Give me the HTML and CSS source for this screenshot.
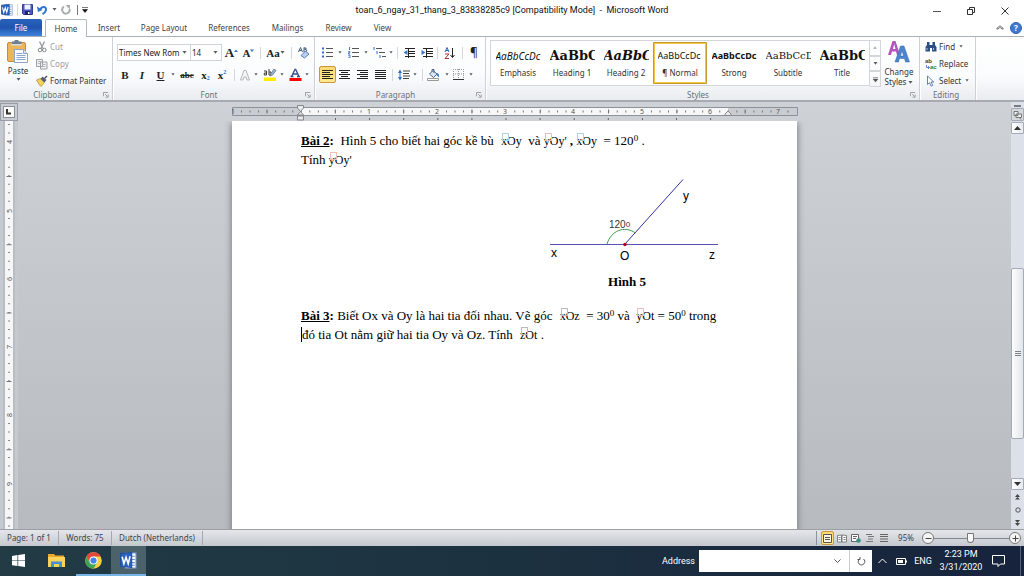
FILE: index.html
```html
<!DOCTYPE html>
<html lang="en">
<head>
<meta charset="utf-8">
<title>toan_6_ngay_31_thang_3_83838285c9 [Compatibility Mode] - Microsoft Word</title>
<link rel="stylesheet" href="styles.css">
</head>
<body>
<svg class="defs" aria-hidden="true">
  <symbol id="down" viewBox="0 0 5 3"><path d="M0.5 0h4L2.500 2.700z" fill="#555b63"/></symbol>
  <symbol id="launch" viewBox="0 0 7 7"><path d="M0.500 5V.5H6" fill="none" stroke="#8b9098"/><path d="M2.500 2.500l2.500 2.500M6 3v3H3" fill="none" stroke="#8b9098"/></symbol>
  <symbol id="wordlogo" viewBox="0 0 16 16"><path d="M5 1h10v14H5z" fill="#fff" stroke="#7fa0d8"/><path d="M11 4h3M11 7h3M11 10h3M11 12.500h3" stroke="#6c8fcb"/><path d="M0.500 1.500L11 0.500v14L.5 13.500z" fill="#2a62bd" stroke="#1f4f9f"/><path d="M2 4.500l1.700 6.500L5.700 5l2 6L9.500 4" fill="none" stroke="#fff" stroke-width="1.500"/></symbol>
</svg>
<div class="app">
  <header class="titlebar">
    <div class="quick">
      <button aria-label="Word menu"><svg width="12" height="12"><use href="#wordlogo"/></svg></button>
      <i class="vline"></i>
      <button aria-label="Save"><svg width="11" height="11" viewBox="0 0 11 11"><path d="M.5.5h10v10H1.500l-1-1z" fill="#4b55c4" stroke="#343c9c"/><path d="M2.500 0.500h6v5h-6z" fill="#eef1ff"/><path d="M3 7h5v4H3z" fill="#1e2560"/><path d="M6 8h1.500v2H6z" fill="#fff"/></svg></button>
      <button aria-label="Undo"><svg width="11" height="10" viewBox="0 0 11 10"><path d="M3 4.500C5 .8 9.200 1.300 9 4.500 8.900 6.500 7.500 8 5.500 9" fill="none" stroke="#2f74cf" stroke-width="2"/><path d="M0 1.500l1 5.500 4.500-2z" fill="#2f74cf"/></svg></button>
      <button aria-label="Undo list"><svg width="5" height="3"><use href="#down"/></svg></button>
      <button class="redo" aria-label="Repeat"><svg width="10" height="10" viewBox="0 0 10 10"><path d="M3 1.700A3.700 3.700 0 1 0 8.500 4" fill="none" stroke="#aaadb1" stroke-width="2"/><path d="M4.500 0H9v4.500z" fill="#aaadb1"/></svg></button>
      <i class="vline dark"></i>
      <button aria-label="Customize toolbar"><svg width="6" height="6" viewBox="0 0 6 6"><path d="M0 .5h6M.5 2.500h5L3 5.500z" stroke="#222" stroke-width=".6"/></svg></button>
    </div>
    <h1 class="title">toan_6_ngay_31_thang_3_83838285c9 [Compatibility Mode] &nbsp;- &nbsp;Microsoft Word</h1>
    <div class="winbtns">
      <button aria-label="Minimize"><svg width="8" height="8"><path d="M0 4.500h8" stroke="#555"/></svg></button>
      <button aria-label="Restore"><svg width="8" height="8" viewBox="0 0 8 8"><path d="M.5 2.500h5v5h-5zM2.500 2V.5h5v5H6" fill="none" stroke="#333"/></svg></button>
      <button aria-label="Close"><svg width="8" height="8" viewBox="0 0 8 8"><path d="M.5.5l7 7M7.500.5l-7 7" stroke="#333"/></svg></button>
    </div>
  </header>
  <nav class="tabs">
    <button class="file">File</button>
    <button class="home">Home</button>
    <button class="t-insert">Insert</button>
    <button class="t-layout">Page Layout</button>
    <button class="t-ref">References</button>
    <button class="t-mail">Mailings</button>
    <button class="t-review">Review</button>
    <button class="t-view">View</button>
    <span class="grow"></span>
    <button class="mini" aria-label="Minimize the ribbon"><svg width="8" height="5" viewBox="0 0 8 5"><path d="M1 4.300L.8 3.300 4 .7l3.200 2.600-.2 1-3-1.800z" fill="#fff" stroke="#555" stroke-width=".8"/></svg></button>
    <button class="help" aria-label="Help">?</button>
  </nav>
  <section class="ribbon">
    <div class="group clipboard">
      <div class="body">
        <button class="paste"><svg width="22" height="24" viewBox="0 0 22 24"><rect x=".5" y="2.500" width="18" height="19" rx="1.500" fill="#edb557" stroke="#c88d35"/><path d="M5 1.500h2L8 0h3l1 1.500h2.500V5H5z" fill="#6d7f91"/><path d="M4 4h11v1.500H4z" fill="#d6dbe0"/><path d="M7.500 9.500h9l4 4v9h-13z" fill="#f9fbff" stroke="#91a4c6"/><path d="M16.500 9.500v4h4" fill="#d9e4f5" stroke="#91a4c6"/><path d="M9.500 13.500h6M9.500 15.500h9M9.500 17.500h9M9.500 19.500h9" stroke="#8ba7cf"/></svg><span>Paste</span><svg width="5" height="3"><use href="#down"/></svg></button>
        <div class="stack">
          <button class="off"><svg width="12" height="12" viewBox="0 0 12 12"><path d="M3.500.5l3.500 7M8.500.5L5 7.500" stroke="#999da2" stroke-width="1.400"/><circle cx="4" cy="9" r="1.800" fill="none" stroke="#85898f"/><circle cx="8.300" cy="9" r="1.800" fill="none" stroke="#85898f"/></svg>Cut</button>
          <button class="off"><svg width="12" height="12" viewBox="0 0 12 12"><path d="M.5 1.500h6v7h-6zM4.500 4h6.500v7H4.500z" fill="#f0f1f2" stroke="#9da1a6"/><path d="M2 3.500h3M2 5.500h2M6 6.500h3.500M6 8.500h3.500" stroke="#b4b7bb"/></svg>Copy</button>
          <button><svg width="12" height="12" viewBox="0 0 12 12"><path d="M.5 5l4-1.500 4 4L5 11.500 3.500 10z" fill="#f3d259" stroke="#a8863a" stroke-width=".7"/><path d="M4.500 4l2-2.500 4 3.500-2 2.500z" fill="#556074"/><path d="M8 3l2.500-2.500 1 1L9 4z" fill="#44506b"/></svg>Format Painter</button>
        </div>
      </div>
      <footer><span>Clipboard</span><button aria-label="Clipboard options"><svg width="6" height="6"><use href="#launch"/></svg></button></footer>
    </div>
    <div class="group font">
      <div class="rows">
        <div class="row f1">
          <label class="combo"><select aria-label="Font"><option>Times New Rom</option></select><svg width="5" height="3"><use href="#down"/></svg></label>
          <label class="combo size"><select aria-label="Font size"><option>14</option></select><svg width="5" height="3"><use href="#down"/></svg></label>
          <button class="serif big" aria-label="Grow font">A<svg width="4" height="8"><path d="M0 3l2-2.500L4 3z" fill="#3c76c3"/></svg></button>
          <button class="serif" aria-label="Shrink font">A<svg width="4" height="8"><path d="M0 .5h4L2 3z" fill="#3c76c3"/></svg></button>
          <i class="vline"></i>
          <button class="serif" aria-label="Change case">Aa<svg width="5" height="3"><use href="#down"/></svg></button>
          <i class="vline"></i>
          <button aria-label="Clear formatting"><svg width="13" height="13" viewBox="0 0 13 13"><path d="M1.500 6L3.500 1.500 5.500 6M2.500 4.500h2M7 1.500V6h2l.8-1.200L9 3.500H7.500M9 3.500V2H7" fill="none" stroke="#3f5875"/><path d="M4 9.500L8.500 5l3.500 3-4.500 4z" fill="#b8cff2" stroke="#5d80b8"/></svg></button>
        </div>
        <div class="row f2">
          <button class="serif" aria-label="Bold">B</button>
          <button class="serif ital" aria-label="Italic">I</button>
          <button class="serif under" aria-label="Underline">U</button>
          <button aria-label="Underline style"><svg width="4" height="3"><use href="#down"/></svg></button>
          <button class="serif strike" aria-label="Strikethrough">abc</button>
          <button class="serif" aria-label="Subscript">x<sub>2</sub></button>
          <button class="serif" aria-label="Superscript">x<sup>2</sup></button>
          <i class="vline"></i>
          <button class="off" aria-label="Text effects"><svg width="12" height="12" viewBox="0 0 12 12"><path d="M1.500 11L5 1.500h2L10.500 11H8L7 8H5L4 11z" fill="#f4f4f4" stroke="#b5b7ba"/></svg><svg width="4" height="3"><use href="#down"/></svg></button>
          <button aria-label="Highlight"><svg width="14" height="13" viewBox="0 0 14 13"><path d="M1 9.500h12V13H1z" fill="#ffec00"/><path d="M1 3h2.500v4H1.300V5h2M6 1v6h2V4H6" fill="none" stroke="#3b3b3b"/><path d="M7 8l1-2.500L11 1l2 1.500-3.500 4.500z" fill="#9ab3d6" stroke="#596b86" stroke-width=".7"/></svg><svg width="4" height="3"><use href="#down"/></svg></button>
          <button aria-label="Font color"><svg width="13" height="13" viewBox="0 0 13 13"><path d="M.5 10h12v3H.5z" fill="#f00"/><path d="M2.500 8.500L6 1.500h.7L10 8.500M4 6h4.500M1.500 8.500h3M8 8.500h3" fill="none" stroke="#31508c" stroke-width="1.300"/></svg><svg width="4" height="3"><use href="#down"/></svg></button>
        </div>
      </div>
      <footer><span>Font</span><button aria-label="Font options"><svg width="6" height="6"><use href="#launch"/></svg></button></footer>
    </div>
    <div class="group para">
      <div class="rows">
        <div class="row p1">
          <button aria-label="Bullets"><svg width="11" height="11" viewBox="0 0 11 11"><path d="M4 1.500h7M4 5.500h7M4 9.500h7" stroke="#555"/><path d="M0 1.500h2M0 5.500h2M0 9.500h2" stroke="#2e6bd0" stroke-width="2"/></svg><svg class="gap" width="4" height="3"><use href="#down"/></svg></button>
          <button aria-label="Numbering"><svg width="11" height="11" viewBox="0 0 11 11"><path d="M4 1.500h7M4 5.500h7M4 9.500h7" stroke="#555"/><path d="M1.500 0v3M.3 4.500h1.500v1.300H.5V7h1.700M.3 8.300h1.700v2.500H.3" fill="none" stroke="#2e6bd0" stroke-width=".9"/></svg><svg class="gap" width="4" height="3"><use href="#down"/></svg></button>
          <button aria-label="Multilevel list"><svg width="13" height="11" viewBox="0 0 13 11"><path d="M3 1.500h6M6 5.500h6M9 9.500h4" stroke="#555"/><path d="M1 0v3M4 4v3M7 8v3" stroke="#2e6bd0"/></svg><svg width="4" height="3"><use href="#down"/></svg></button>
          <i class="vline"></i>
          <button aria-label="Decrease indent"><svg width="12" height="10" viewBox="0 0 12 10"><path d="M2 .5h10M6 3.500h6M6 5.500h6M2 8.500h10M5.500 0v10" stroke="#222"/><path d="M4.500 2L.5 4.500l4 2.500z" fill="#3478d0"/></svg></button>
          <button aria-label="Increase indent"><svg width="12" height="10" viewBox="0 0 12 10"><path d="M2 .5h10M6 3.500h6M6 5.500h6M2 8.500h10M5.500 0v10" stroke="#222"/><path d="M.5 2l4 2.500-4 2.500z" fill="#3478d0"/></svg></button>
          <i class="vline"></i>
          <button aria-label="Sort"><svg width="11" height="12" viewBox="0 0 11 12"><path d="M1 5L3 .5 5 5M2 3.500h2" fill="none" stroke="#2e62c0"/><path d="M1 7h4L1 11.500h4" fill="none" stroke="#a33"/><path d="M8.500 1v9M6.500 8l2 2.500 2-2.500" fill="none" stroke="#222"/></svg></button>
          <i class="vline"></i>
          <button aria-label="Show marks" class="pil">¶</button>
        </div>
        <div class="row p2">
          <button class="on" aria-label="Align left"><svg width="11" height="10" viewBox="0 0 11 10"><path d="M0 .5h11M0 2.500h8M0 4.500h11M0 6.500h8M0 8.500h11" stroke="#222"/></svg></button>
          <button aria-label="Center"><svg width="11" height="10" viewBox="0 0 11 10"><path d="M0 .5h11M2 2.500h7M0 4.500h11M2 6.500h7M0 8.500h11" stroke="#222"/></svg></button>
          <button aria-label="Align right"><svg width="11" height="10" viewBox="0 0 11 10"><path d="M0 .5h11M3 2.500h8M0 4.500h11M3 6.500h8M0 8.500h11" stroke="#222"/></svg></button>
          <button aria-label="Justify"><svg width="11" height="10" viewBox="0 0 11 10"><path d="M0 .5h11M0 2.500h11M0 4.500h11M0 6.500h11M0 8.500h11" stroke="#222"/></svg></button>
          <i class="vline"></i>
          <button aria-label="Line spacing"><svg width="12" height="12" viewBox="0 0 12 12"><path d="M5 2h7M5 4.500h6M5 7h7M5 9.500h6" stroke="#444"/><path d="M2 2v8" stroke="#2e6bd0"/><path d="M0 4l2-3.500L4 4zM0 8l2 3.500L4 8z" fill="#2e6bd0"/></svg><svg width="4" height="3"><use href="#down"/></svg></button>
          <i class="vline"></i>
          <button aria-label="Shading"><svg width="13" height="12" viewBox="0 0 13 12"><path d="M.5 9.500h11v2H.5z" fill="#fff" stroke="#999"/><path d="M2.500 5L6 1.500 10 5 6.500 8.500z" fill="#dbe8fa" stroke="#50658a"/><path d="M5 3V.5h2V4" fill="none" stroke="#50658a"/><path d="M9.500 4c2 0 3 2 2.500 4.500L9.500 6z" fill="#3e7bc9"/></svg><svg class="gap" width="4" height="3"><use href="#down"/></svg></button>
          <button aria-label="Borders"><svg width="11" height="11" viewBox="0 0 11 11"><path d="M.5 0v9M5.500 0v9M10.500 0v9M0 .5h11M0 5h11" stroke="#999" stroke-dasharray="1 1"/><path d="M0 10.500h11" stroke="#333"/></svg><svg class="gap" width="4" height="3"><use href="#down"/></svg></button>
        </div>
      </div>
      <footer><span>Paragraph</span><button aria-label="Paragraph options"><svg width="6" height="6"><use href="#launch"/></svg></button></footer>
    </div>
    <div class="group styles">
      <div class="body">
        <div class="gallery">
          <button><b class="s-emph">AaBbCcDc</b><span>Emphasis</span></button>
          <button><b class="s-head">AaBbC</b><span>Heading 1</span></button>
          <button><b class="s-head s-it">AaBbC</b><span>Heading 2</span></button>
          <button class="sel"><b class="s-norm">AaBbCcDc</b><span>¶ Normal</span></button>
          <button><b class="s-strong">AaBbCcDc</b><span>Strong</span></button>
          <button><b class="s-sub">AaBbCcD</b><span>Subtitle</span></button>
          <button><b class="s-head">AaBbC</b><span>Title</span></button>
        </div>
        <div class="gscroll">
          <button class="off" aria-label="Up"><svg width="4" height="3"><path d="M0 3l2-3 2 3z" fill="#bbb"/></svg></button>
          <button aria-label="Down"><svg width="5" height="3"><use href="#down"/></svg></button>
          <button aria-label="More styles"><svg width="5" height="5"><path d="M0 .5h5M0 2h5L2.500 5z" stroke="#555" stroke-width=".5" fill="#555"/></svg></button>
        </div>
        <button class="change"><svg width="22" height="22" viewBox="0 0 22 22"><path d="M0 14L4.500 0h3L12 14H9L8 10.500H4L3 14zM5 8h2.500L6.200 3z" fill="#b455bb"/><path d="M7 21L12.500 5h3.500l5.500 16h-4l-1-3.500h-5L10.500 21zM12.500 15h3l-1.500-5.500z" fill="#4b85d0" stroke="#3566ab" stroke-width=".5"/></svg><span>Change</span><span>Styles <svg width="5" height="3"><use href="#down"/></svg></span></button>
      </div>
      <footer><span>Styles</span><button aria-label="Styles options"><svg width="6" height="6"><use href="#launch"/></svg></button></footer>
    </div>
    <div class="group editing">
      <div class="stack">
        <button><svg width="12" height="11" viewBox="0 0 12 11"><path d="M2 1h2.500v3h3V1H10v3l1.500 2v4.500H7V7H5v3.500H.5V6L2 4z" fill="#2d4f86"/><path d="M2 7v2M8.500 7v2" stroke="#a9c4ec"/></svg>Find <svg class="gap" width="4" height="3"><use href="#down"/></svg></button>
        <button><svg width="12" height="12" viewBox="0 0 12 12"><text x="0" y="5" class="ab">ab</text><text x="5" y="11" class="ac">ac</text><path d="M1.500 7v2.500h3M3 8l1.500 1.500L3 11" fill="none" stroke="#2e6bd0" stroke-width=".8"/></svg>Replace</button>
        <button><svg width="12" height="12" viewBox="0 0 12 12"><path d="M2.500 1v8.500l2-1.800 1.700 3.500 1.500-.8L6 7h2.800z" fill="#fff" stroke="#41659c" stroke-width=".8"/></svg>Select <svg class="gap" width="4" height="3"><use href="#down"/></svg></button>
      </div>
      <footer><span>Editing</span></footer>
    </div>
  </section>
  <main class="work">
    <div class="left">
      <button class="tabsel" aria-label="Tab selector"><svg width="10" height="10"><path d="M3 2v4.500h4" fill="none" stroke="#333" stroke-width="2"/></svg></button>
      <div class="vruler"><svg width="8" height="409" aria-hidden="true">
        <path d="M4 3v406" stroke="#888" stroke-width="2" stroke-dasharray="1 7.540"/>
        <path d="M4 55v354" stroke="#777" stroke-width="5" stroke-dasharray="1 67.300"/>
        <g class="rnum"><path d="M0 18h8v7H0zM0 87h8v7H0zM0 155h8v7H0zM0 223h8v7H0zM0 291h8v7H0zM0 360h8v7H0z" fill="#f6f6f6"/>
        <text transform="translate(7 21) rotate(-90)">4</text><text transform="translate(7 90) rotate(-90)">5</text><text transform="translate(7 158) rotate(-90)">6</text><text transform="translate(7 226) rotate(-90)">7</text><text transform="translate(7 294) rotate(-90)">8</text><text transform="translate(7 363) rotate(-90)">9</text></g>
      </svg></div>
    </div>
    <div class="center">
      <svg class="hruler" width="566" height="19" viewBox="0 0 566 19" aria-hidden="true">
        <path d="M.5 5.500h565v8H.5z" fill="#c9cdd2" stroke="#8c929b"/>
        <path d="M69 6h427v7H69z" fill="#f7f7f7"/>
        <path d="M9 9.500h553" stroke="#777" stroke-width="2" stroke-dasharray="1 7.540"/>
        <path d="M34.500 9.500h520" stroke="#777" stroke-width="4" stroke-dasharray="1 67.300"/>
        <path d="M103 17h392" stroke="#666" stroke-width="2" stroke-dasharray="1 33.100"/>
        <path d="M134 6h6v7h-6zM202 6h6v7h-6zM270 6h6v7h-6zM338 6h6v7h-6zM407 6h6v7h-6zM475 6h6v7h-6z" fill="#f7f7f7"/>
        <path d="M543 6h6v7h-6z" fill="#c9cdd2"/>
        <g class="rnum"><text x="1" y="12">1</text><text x="137" y="12">1</text><text x="205" y="12">2</text><text x="273" y="12">3</text><text x="341" y="12">4</text><text x="410" y="12">5</text><text x="478" y="12">6</text><text x="546" y="12">7</text></g>
        <path d="M65.500 3.500h6v2.500l-3 3.500 3 3.500h-6l3-3.500-3-3.500zM65.500 14h6v4h-6zM493 13.500v-1.500l3-3 3 3v1.500z" fill="#e9e9e9" stroke="#85898e"/>
      </svg>
      <article class="page" lang="vi">
        <p><b><u>Bài 2</u>:</b>&nbsp; Hình 5 cho biết hai góc kề bù <span class="eq wide">xOy</span>&nbsp; và <span class="eq red">yOy'</span> <b>,</b> <span class="eq">xOy</span>&nbsp; = 120<sup>0</sup> .</p>
        <p>Tính <span class="eq red">yOy'</span></p>
        <figure>
          <svg width="170" height="92" viewBox="0 0 170 92" role="img" aria-label="Angle xOy of 120 degrees">
            <path d="M1 69.500h168" stroke="#5454b8"/><path d="M76 69L134 4.500" stroke="#3030a4" fill="none"/>
            <path d="M58 69C62 56 75 50 86.500 58" fill="none" stroke="#3e9c45"/>
            <circle cx="76" cy="69.500" r="1.800" fill="#b00020"/>
            <g class="figtext"><text x="2" y="82">x</text><text x="71" y="85">O</text><text x="160" y="84">z</text><text x="134" y="25">y</text></g>
            <text class="deg" x="60" y="53">120<tspan class="degsup" dy="-1">0</tspan></text>
          </svg>
          <figcaption>Hình 5</figcaption>
        </figure>
        <p><b><u>Bài 3</u>:</b> Biết Ox và Oy là hai tia đối nhau. Vẽ góc <span class="eq small wide">xOz</span>&nbsp; = 30<sup>0</sup> và&nbsp; <span class="eq red">yOt</span> = 50<sup>0</sup> trong <span class="caret">đó</span> tia Ot nằm giữ hai tia Oy và Oz. Tính <span class="eq small wide">zOt</span> .</p>
      </article>
    </div>
    <aside class="scroll">
      <i class="split"></i>
      <button class="sbtn rulerbtn" aria-label="View ruler"><svg width="10" height="10" viewBox="0 0 10 10"><path d="M1 1.500h4v4H1zM3 4h5.500v3.500H3zM6 7l2 2.500" fill="#eee" stroke="#777"/></svg></button>
      <button class="sbtn" aria-label="Scroll up"><svg width="7" height="4"><path d="M0 4l3.500-4L7 4z" fill="#333"/></svg></button>
      <div class="track"><i class="above"></i><div class="thumb"><svg width="6" height="6"><path d="M0 .5h6M0 2.500h6M0 4.500h6" stroke="#7b828c"/></svg></div><i class="below"></i></div>
      <button class="sbtn" aria-label="Scroll down"><svg width="7" height="4"><path d="M0 0h7L3.500 4z" fill="#333"/></svg></button>
      <button class="nav" aria-label="Previous page"><svg width="5" height="6"><path d="M0 3l2.500-3L5 3zM0 5.500L2.500 3 5 5.500z" fill="#444"/></svg></button>
      <button class="nav" aria-label="Browse object"><svg width="6" height="6"><circle cx="3" cy="3" r="2.200" fill="none" stroke="#555"/></svg></button>
      <button class="nav" aria-label="Next page"><svg width="5" height="6"><path d="M0 0h5L2.500 3zM0 3h5L2.500 6z" fill="#444"/></svg></button>
    </aside>
  </main>
  <div class="status">
    <button class="st1">Page: 1 of 1</button><button class="st2">Words: 75</button><button class="st3">Dutch (Netherlands)</button>
    <span class="grow"></span>
    <div class="views">
      <button class="on" aria-label="Print layout"><svg width="9" height="9" viewBox="0 0 9 9"><path d="M.5.5h8v8h-8zM2 3.500h5M2 5.500h5" fill="#fff8df" stroke="#555"/></svg></button>
      <button aria-label="Full screen reading"><svg width="10" height="9" viewBox="0 0 10 9"><path d="M.5 1.500l4-.5v7H.5zM9.500 1.500L5 1v7h4.500zM1.500 3.500h2M1.500 5.500h2M6.500 3.500h2M6.500 5.500h2" fill="#fff" stroke="#666" stroke-width=".8"/></svg></button>
      <button aria-label="Web layout"><svg width="10" height="9" viewBox="0 0 10 9"><path d="M.5.5h7v7h-7zM2 2.500h4M2 4.500h3" fill="#fff" stroke="#666"/><circle cx="7.500" cy="6.500" r="2.300" fill="#3b8f80"/></svg></button>
      <button aria-label="Outline"><svg width="8" height="8"><path d="M0 .5h6M2 2.500h6M2 5h5M0 7.500h7" stroke="#777"/></svg></button>
      <button aria-label="Draft"><svg width="8" height="8"><path d="M0 .5h8M0 2.500h8M0 5h8M0 7.500h8" stroke="#666"/></svg></button>
    </div>
    <button class="pct">95%</button>
    <button class="round" aria-label="Zoom out"><svg width="7" height="7"><path d="M.5 3.500h6" stroke="#444"/></svg></button>
    <input class="zoom" type="range" min="0" max="100" value="48" aria-label="Zoom">
    <button class="round" aria-label="Zoom in"><svg width="7" height="7"><path d="M.5 3.500h6M3.500.5v6" stroke="#444"/></svg></button>
  </div>
  <footer class="taskbar">
    <button class="task" aria-label="Start"><svg width="13" height="13" viewBox="0 0 13 13"><path d="M0 2l5.500-1v5.200H0zM6.200.9L13 0v6.200H6.200zM0 6.800h5.500V12L0 11.200zM6.200 6.800H13V13l-6.800-.9z" fill="#fff"/></svg></button>
    <button class="task wide" aria-label="File Explorer"><svg width="17" height="15" viewBox="0 0 17 15"><path d="M0 1h6l1.500 1.500H16V14H0z" fill="#eaa92c"/><path d="M0 4h17v10H0z" fill="#fbd35b"/><path d="M3 14V8.500h11V14h-3v-3H6v3z" fill="#3d93d6"/></svg></button>
    <button class="task run" aria-label="Chrome"><svg width="17" height="17" viewBox="0 0 17 17"><circle cx="8.500" cy="8.500" r="8.300" fill="#f9cf3f"/><path d="M1.300 4.400A8.300 8.300 0 0 1 15.700 4.400H8.500L5 10.500z" fill="#e2483d"/><path d="M1.300 4.400A8.300 8.300 0 0 0 8.500 16.800l3.600-6.200-7.200 0z" fill="#40a357"/><circle cx="8.500" cy="8.500" r="4.100" fill="#fff"/><circle cx="8.500" cy="8.500" r="3.100" fill="#4382e8"/></svg></button>
    <button class="task run active" aria-label="Word"><svg width="17" height="17"><use href="#wordlogo"/></svg></button>
    <span class="grow"></span>
    <label class="addr" for="address">Address</label>
    <div class="field"><input id="address" type="text"><svg width="7" height="4"><path d="M.5.5l3 3 3-3" fill="none" stroke="#555"/></svg></div>
    <button class="refresh" aria-label="Refresh"><svg width="9" height="9" viewBox="0 0 9 9"><path d="M2.500 2A3.300 3.300 0 1 0 6.500 2M3 0v2.500H.5" fill="none" stroke="#555"/></svg></button>
    <button class="tray up" aria-label="Hidden icons"><svg width="9" height="6"><path d="M.5 5l4-4 4 4" fill="none" stroke="#fff"/></svg></button>
    <button class="tray" aria-label="Battery"><svg width="11" height="7" viewBox="0 0 11 7"><path d="M.5.5h9v6h-9z" fill="none" stroke="#fff"/><path d="M2 2h5v3H2zM10 2.500h1v2h-1z" fill="#fff"/></svg></button>
    <button class="tray lang">ENG</button>
    <button class="tray clock"><span>2:23 PM</span><span>3/31/2020</span></button>
    <button class="tray note" aria-label="Notifications"><svg width="13" height="12" viewBox="0 0 13 12"><path d="M.5.5h12v8.500H8.500L6 11.500V9H.5z" fill="none" stroke="#fff"/></svg></button>
  </footer>
</div>
</body>
</html>
```
FILE: styles.css
```css
* { box-sizing: border-box; }
html, body { height: 100%; margin: 0; }
body { font: 8px/12px "Noto Sans", "Open Sans", sans-serif; color: #333; }
button { font: inherit; color: inherit; background: none; border: 0; padding: 0; margin: 0; white-space: nowrap; display: flex; align-items: center; justify-content: center; }
svg { display: block; flex: none; }
.defs { position: absolute; width: 0; height: 0; }
.grow { flex: 1; }
.app { height: 100vh; display: flex; flex-direction: column; overflow: hidden; background: #fff; }

.titlebar { height: 19px; flex: none; display: grid; grid-template-columns: 100px 1fr 100px; align-items: center; }
.quick { display: flex; align-items: center; gap: 4px; padding-left: 1px; }
.vline { width: 1px; height: 12px; background: #d3d6da; justify-self: center; }
.vline.dark { background: #777; height: 10px; margin-left: 2px; }
.title { margin: 0; font: 400 9px/12px Roboto, "Noto Sans", sans-serif; text-align: center; color: #111; white-space: nowrap; }
.winbtns { display: flex; justify-content: flex-end; gap: 26px; padding: 3px 15px 0 0; }

.tabs { height: 18px; flex: none; display: flex; align-items: stretch; border-bottom: 1px solid #a9b0b9; color: #444; padding-right: 2px; }
.tabs .file { width: 42px; background: linear-gradient(#2a62bb, #1f55ae 50%, #3f83dc); color: #fff; border-radius: 2px 2px 0 0; }
.tabs .home { width: 42px; margin: 0 0 -1px 3px; border: 1px solid #b3b9c2; border-bottom: 0; border-radius: 2px 2px 0 0; background: #fff; }
.t-insert { width: 44px; }
.t-layout { width: 66px; }
.t-ref { width: 64px; }
.t-mail { width: 53px; }
.t-review { width: 49px; }
.t-view { width: 39px; }
.mini { margin-right: 6px; }
.tabs .help { width: 12px; height: 12px; align-self: center; border-radius: 50%; background: #3f7ad0; border: 1px solid #2f62b0; color: #fff; font-weight: 700; }

.ribbon { height: 65px; flex: none; display: flex; background: linear-gradient(#fff, #fbfcfd 60%, #e9ecf0); border-bottom: 2px solid #a7abb1; }
.group { display: flex; flex-direction: column; border-right: 1px solid #cdd1d7; box-shadow: 1px 0 #fff; flex: none; }
.group footer { display: flex; height: 11px; margin-top: auto; align-items: center; color: #6b7079; padding-right: 3px; }
.group footer span { flex: 1; text-align: center; }
.body { display: flex; }
.clipboard { width: 113px; }
.paste { flex-direction: column; justify-content: flex-start; width: 36px; padding-top: 3px; }
.paste span { line-height: 14px; }
.stack { display: flex; flex-direction: column; padding-top: 1px; }
.stack button { height: 17px; gap: 2px; justify-content: flex-start; }
.off { color: #9a9da2; }

.rows { display: flex; flex-direction: column; gap: 5px; padding: 7px 0 0 4px; }
.row { display: grid; height: 17px; align-items: center; }
.row button { height: 17px; gap: 3px; }
.gap { margin-left: 2px; }
.font { width: 202px; }
.f1 { grid-template-columns: 74px 31px 19px 15px 8px 23px 8px 16px; }
.f2 { grid-template-columns: 16px 18px 19px 6px 22px 15px 18px 6px 23px 26px 25px; }
.combo { position: relative; height: 17px; border: 1px solid #d1d5da; background: #fff; display: flex; align-items: center; }
.combo.size { border-left: 0; }
.combo select { appearance: none; border: 0; background: none; font: inherit; color: #222; padding: 0 0 0 1px; width: 100%; outline: 0; }
.combo svg { position: absolute; right: 3px; top: 6px; pointer-events: none; }
.serif { font-family: "Liberation Serif", serif; font-size: 11px; font-weight: 700; color: #222; }
.row .serif { gap: 0; }
.row .big { font-size: 13px; }
.ital { font-style: italic; }
.under { text-decoration: underline; }
.row .strike { font-size: 9px; text-decoration: line-through; }
.serif sub, .serif sup { font-size: 6px; line-height: 6px; color: #2e6bd0; }
.serif sub { align-self: flex-end; padding-bottom: 2px; }
.serif sup { align-self: flex-start; padding-top: 3px; }

.para { width: 171px; }
.p1 { grid-template-columns: 26px 25px 25px 5px 18px 17px 5px 18px 9px 14px; }
.p2 { grid-template-columns: 17px 17px 18px 18px 6px 24px 6px 25px 25px; }
.pil { font-size: 12px; color: #222; }
.on { background: linear-gradient(#fbd873, #ffe98f); border: 1px solid #c9983c; border-radius: 2px; }

.styles { width: 434px; }
.styles .body { padding: 3px 0 0 4px; }
.gallery { display: flex; height: 46px; border: 1px solid #d3d6db; background: #fff; }
.gallery button { width: 54px; flex-direction: column; border: 1px solid transparent; margin: 1px 0; padding-top: 2px; }
.gallery b { width: 45px; overflow: hidden; text-align: left; font-weight: 400; height: 18px; line-height: 18px; color: #111; font-size: 9px; }
.gallery span { line-height: 16px; }
.gallery .sel { border: 2px solid #f2c84b; outline: 1px solid #c9962e; outline-offset: -1px; border-radius: 1px; }
.gallery .s-emph { font-style: italic; font-size: 10px; }
.gallery .s-head { font-family: "DejaVu Serif", serif; font-size: 13px; font-weight: 700; }
.gallery .s-it { font-style: italic; }
.gallery .s-strong { font-weight: 700; }
.gallery .s-sub { font-family: "DejaVu Serif", serif; font-size: 10px; }
.gscroll { width: 11px; display: flex; flex-direction: column; }
.gscroll button { flex: 1; border: 1px solid #d3d6db; border-left: 0; }
.change { flex-direction: column; width: 36px; line-height: 10px; justify-content: flex-start; }
.change > svg { margin: 1px 0 4px; }
.change span { display: flex; align-items: center; gap: 2px; }
.editing { width: 56px; }
.editing .stack { padding-left: 5px; }
.ab { font: 700 6px "Liberation Sans", sans-serif; fill: #444; }
.ac { font: 700 6px "Liberation Sans", sans-serif; fill: #21883b; }

.work { flex: 1; min-height: 0; display: grid; grid-template-columns: 18px 1fr 13px; background: linear-gradient(#ced1d6, #b7babe); }
.left { display: flex; flex-direction: column; align-items: flex-start; min-height: 0; background: #c6cad0; }
.tabsel { width: 18px; height: 18px; flex: none; margin-top: 1px; border: 1px solid #989da5; background: #c9cdd3; }
.tabsel svg { background: #fafafa; outline: 1px solid #8a9098; }
.vruler { flex: 1; min-height: 0; overflow: hidden; margin-left: 3px; border: solid #b9bdc4; border-width: 0 2px; background: #f6f6f6; }
.rnum { font: 7px "Noto Sans", sans-serif; fill: #555; text-anchor: middle; }
.center { min-width: 0; min-height: 0; display: flex; flex-direction: column; align-items: center; overflow: hidden; }
.hruler { margin-left: 1px; }
.page { flex: 1; width: 565px; max-width: 100%; background: #fff; padding: 10px 70px 0 69px; box-shadow: 0 3px 6px 1px #7d828a; color: #000; font: 13px/19px "Liberation Serif", serif; clip-path: inset(0 -8px 0 -8px); }
.page p { margin: 0; }
.page sup { font-size: 9px; line-height: 0; vertical-align: 4px; }
.eq { position: relative; font-size: 12px; line-height: 0; }
.eq.wide { margin-left: 4px; }
.eq::before { content: ""; position: absolute; left: 1px; top: -1px; width: 5px; height: 6px; border: 1px solid #a9d5de; }
.eq.red::before { border-color: #edbcbc; }
.eq.small::before { border-color: #bbb; }
.page figure { margin: 6px 8px 0 auto; width: 170px; display: flex; flex-direction: column; align-items: center; }
.page figcaption { font-weight: 700; padding: 5px 14px 15px 0; }
.figtext { font: 12px "Liberation Sans", sans-serif; }
.deg { font: 10px "Liberation Sans", sans-serif; fill: #333; }
.degsup { font-size: 8px; }
.caret { border-left: 1px solid #000; }

.scroll { display: flex; flex-direction: column; align-items: stretch; background: #dce0e8; min-height: 0; }
.split { height: 2px; margin: 3px 3px 1px; background: #777b82; flex: none; }
.sbtn { height: 12px; flex: none; border: 1px solid #a4abb6; border-radius: 1px; background: linear-gradient(90deg, #fff, #e6e9ee); }
.rulerbtn { height: 13px; margin-bottom: 1px; background: #d5d8dd; }
.track { flex: 1; display: flex; flex-direction: column; }
.above { flex: 135; }
.thumb { flex: 171; display: flex; align-items: center; justify-content: center; border: 1px solid #a4abb6; border-radius: 2px; background: linear-gradient(90deg, #fdfdfe, #e2e5eb); }
.below { flex: 39; }
.nav { height: 13px; flex: none; }

.status { height: 17px; flex: none; display: flex; align-items: center; background: linear-gradient(#e4e6ea, #c5c9cf); border-top: 1px solid #9a9fa6; color: #444; padding-right: 3px; }
.status > button:not(.round) { height: 14px; }
.st1, .st2, .st3 { border-right: 1px solid #a4a8af; }
.st1 { width: 59px; }
.st2 { width: 53px; }
.st3 { width: 91px; }
.views { display: flex; align-items: center; gap: 1px; border-left: 1px solid #8e9299; padding-left: 4px; }
.views button { width: 13px; height: 14px; }
.pct { width: 32px; }
.round { width: 12px; height: 12px; border: 1px solid #777; border-radius: 50%; background: #f5f5f5; }
.zoom { appearance: none; width: 75px; height: 12px; margin: 0; background: linear-gradient(#83888f, #83888f) center / 100% 1px no-repeat; }
.zoom::-webkit-slider-thumb { appearance: none; width: 7px; height: 10px; border: 1px solid #777; border-radius: 1px 1px 4px 4px; background: #fafafa; }

.taskbar { height: 30px; flex: none; display: flex; align-items: stretch; background: linear-gradient(90deg, #223b45, #1c3140 50%, #17233d); color: #fff; font: 9px/12px Roboto, "Noto Sans", sans-serif; padding-right: 3px; }
.task { width: 36px; border-bottom: 2px solid transparent; }
.task.wide { width: 40px; }
.task.run { width: 35px; border-bottom: 2px solid #76b5e6; }
.task.active { background: #4c626b; }
.addr { align-self: center; margin-right: 4px; }
.field { width: 150px; margin: 4px 0; background: #fff; display: flex; align-items: center; padding-right: 8px; }
.field input { flex: 1; min-width: 0; border: 0; background: none; outline: 0; font: inherit; }
.refresh { width: 23px; margin: 4px 0; background: #fff; border-left: 1px solid #ccc; }
.tray.up { width: 21px; }
.tray { width: 16px; }
.tray.lang { width: 28px; }
.tray.clock { width: 48px; flex-direction: column; line-height: 13px; }
.tray.note { width: 36px; border-right: 1px solid #53607a; padding-right: 8px; }
```
